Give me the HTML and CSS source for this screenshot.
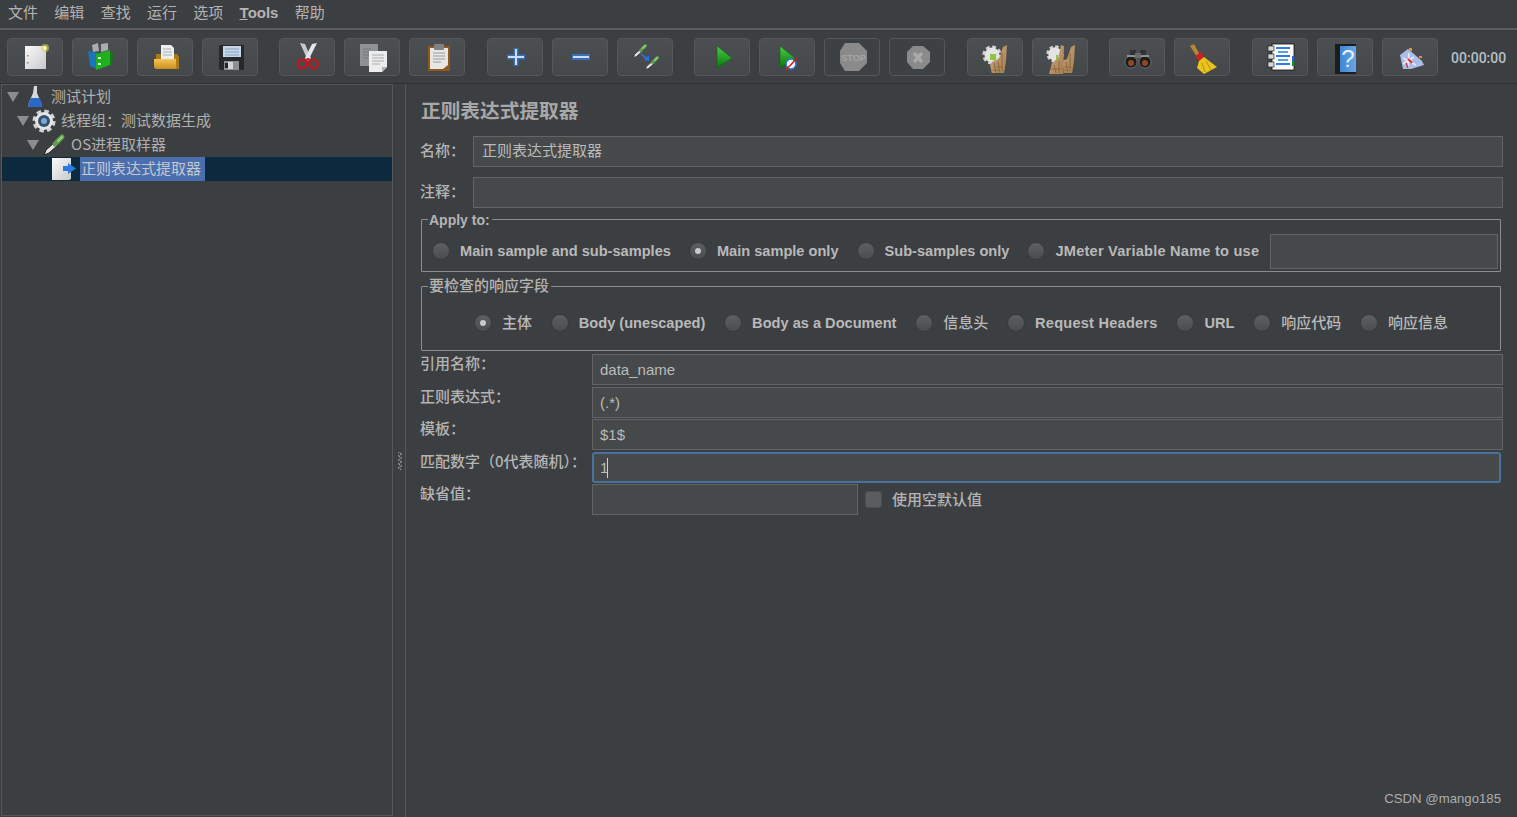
FILE: index.html
```html
<!DOCTYPE html>
<html lang="zh-CN">
<head>
<meta charset="utf-8">
<title>Apache JMeter</title>
<link rel="stylesheet" href="styles.css">
</head>
<body>
<svg class="defs" aria-hidden="true">
  <defs>
    <linearGradient id="gPage" x1="0" y1="0" x2="1" y2="1"><stop offset="0" stop-color="#fafafa"/><stop offset="1" stop-color="#c9c9c9"/></linearGradient>
    <linearGradient id="gFolder" x1="0" y1="0" x2="0" y2="1"><stop offset="0" stop-color="#f6c552"/><stop offset="1" stop-color="#c98f1f"/></linearGradient>
    <linearGradient id="gPlay" x1="0" y1="0" x2="0" y2="1"><stop offset="0" stop-color="#4fc94f"/><stop offset="1" stop-color="#057a05"/></linearGradient>
    <linearGradient id="gWood" x1="0" y1="0" x2="1" y2="1"><stop offset="0" stop-color="#c9a77c"/><stop offset="1" stop-color="#a67e50"/></linearGradient>
    <linearGradient id="gBlue" x1="0" y1="0" x2="1" y2="0"><stop offset="0" stop-color="#3f86d6"/><stop offset="1" stop-color="#6aa6e6"/></linearGradient>
    <symbol id="pipette" viewBox="0 0 24 24">
      <path d="M2 22 L4 17 L13 9 L16 12 L7 20 Z" fill="#e4e4e4" stroke="#222" stroke-width="1"/>
      <path d="M13 11 L20 4" stroke="#5f9c4e" stroke-width="5" stroke-linecap="round"/>
      <path d="M16 8 L20 4" stroke="#9ccf86" stroke-width="2" stroke-linecap="round"/>
    </symbol>
    <symbol id="gear" viewBox="0 0 24 24">
      <circle cx="12" cy="12" r="9.8" fill="none" stroke="#d2d2d2" stroke-width="3.5" stroke-dasharray="4.5 3.2"/>
      <circle cx="12" cy="12" r="9" fill="#e4e4e4"/>
    </symbol>
    <symbol id="wood" viewBox="0 0 32 32">
      <path d="M11 24 L14 20 L20 18 L24 6 L28 4 L27 20 L25 33 L13 33 Z" fill="url(#gWood)"/>
      <path d="M15 22 L17 32 M19 21 L21 32 M23 12 L23 30 M17 26 H24 M14 29 H20" stroke="#8a6841" stroke-width="1"/>
    </symbol>
  </defs>
</svg>

<nav class="menubar">
  <span class="menu">文件</span>
  <span class="menu">编辑</span>
  <span class="menu">查找</span>
  <span class="menu">运行</span>
  <span class="menu">选项</span>
  <span class="menu menu-latin"><u>T</u>ools</span>
  <span class="menu">帮助</span>
</nav>

<header class="toolbar">
  <div class="tool-group">
    <button class="tool" title="新建"><svg class="ico" viewBox="0 0 32 32">
      <rect x="6" y="5" width="21" height="23" fill="url(#gPage)"/>
      <rect x="8" y="14" width="1.5" height="1.5" fill="#888"/><rect x="8" y="21" width="1.5" height="1.5" fill="#888"/>
      <circle cx="26" cy="7" r="4" fill="#d8cf6a" opacity=".6"/><circle cx="26" cy="7" r="2" fill="#fff59a"/>
    </svg></button>
    <button class="tool" title="模板"><svg class="ico" viewBox="0 0 32 32">
      <path d="M8 4 L14 2 L15 10 L9 11 Z M17 3 L24 2 L24 9 L17 11 Z" fill="#a9adb0"/>
      <path d="M4 10 L13 12 L13 28 L6 25 Z" fill="#1c74bd"/>
      <path d="M12 13 L26 9 L26 24 L12 29 Z" fill="#1fb01f"/>
      <path d="M26 10 L29 13 L28 24 L26 25 Z" fill="#0f7d0f"/>
      <rect x="14" y="16" width="3" height="2" fill="#d7f5d7"/><rect x="14" y="22" width="3" height="2" fill="#d7f5d7"/>
    </svg></button>
    <button class="tool" title="打开"><svg class="ico" viewBox="0 0 32 32">
      <path d="M7 13 H28 L30 16 V28 H7 Z" fill="#a9791b"/>
      <path d="M12 4 H22 L25 7 V18 H12 Z" fill="#eceff1"/>
      <path d="M14 8 H22 M14 11 H23 M14 14 H23" stroke="#a9adb0" stroke-width="1"/>
      <path d="M5 18 H27 V28 H8 Q5 28 5 25 Z" fill="url(#gFolder)"/>
    </svg></button>
    <button class="tool" title="保存"><svg class="ico" viewBox="0 0 32 32">
      <path d="M5 6 Q5 4 7 4 H30 V29 H7 Q5 29 5 27 Z" fill="#26282a"/>
      <rect x="9" y="5" width="18" height="11" fill="#c9d8e8"/>
      <path d="M11 8 H25 M11 11 H25 M11 14 H25" stroke="#7fa0c6" stroke-width="1"/>
      <rect x="10" y="20" width="15" height="9" fill="#8d9092"/><rect x="14" y="21" width="5" height="7" fill="#d4d6d7"/>
      <rect x="11" y="22" width="3" height="5" fill="#222"/>
    </svg></button>
  </div>
  <div class="tool-group">
    <button class="tool" title="剪切"><svg class="ico" viewBox="0 0 32 32">
      <path d="M9 2 L14 3 L20 17 L17 20 Z" fill="#c6c9cb"/>
      <path d="M26 2 L21 3 L14 17 L17 20 Z" fill="#e4e6e7"/>
      <circle cx="11" cy="23" r="4.4" fill="none" stroke="#c8141c" stroke-width="2.2"/>
      <circle cx="22.5" cy="23" r="4.4" fill="none" stroke="#c8141c" stroke-width="2.2"/>
      <path d="M14 20 L17 18 L20 20" fill="none" stroke="#c8141c" stroke-width="2"/>
    </svg></button>
    <button class="tool" title="复制"><svg class="ico" viewBox="0 0 32 32">
      <rect x="4" y="3" width="18" height="22" fill="#8f9193"/>
      <path d="M7 8 H15 M7 11 H15 M7 14 H15 M7 17 H12" stroke="#74767a" stroke-width="1"/>
      <path d="M13 10 H31 V26 L26 31 H13 Z" fill="#ececec"/>
      <path d="M31 26 L26 26 V31 Z" fill="#b5b5b5"/>
      <path d="M16 14 H28 M16 17 H28 M16 20 H28 M16 23 H24" stroke="#a9abad" stroke-width="1"/>
    </svg></button>
    <button class="tool" title="粘贴"><svg class="ico" viewBox="0 0 32 32">
      <rect x="7" y="5" width="22" height="25" rx="1" fill="#8f5a18"/>
      <path d="M9 7 H27 V24 L22 28 H9 Z" fill="#e6e6e6"/>
      <rect x="13" y="3" width="10" height="6" rx="1" fill="#7f8385"/>
      <path d="M12 12 H24 M12 15 H24 M12 18 H24 M12 21 H20" stroke="#9a9c9e" stroke-width="1"/>
    </svg></button>
  </div>
  <div class="tool-group">
    <button class="tool" title="展开"><svg class="ico" viewBox="0 0 32 32">
      <path d="M14.5 7 H19.5 V13.5 H26 V18.5 H19.5 V25 H14.5 V18.5 H8 V13.5 H14.5 Z" fill="#3a6fb8"/>
      <path d="M16 8 H18 V15 H25 V17 H18 V24 H16 V17 H9 V15 H16 Z" fill="#c9ddf4"/>
    </svg></button>
    <button class="tool" title="折叠"><svg class="ico" viewBox="0 0 32 32">
      <rect x="8" y="13" width="18" height="6" fill="#3a6fb8"/>
      <rect x="9" y="15" width="16" height="2" fill="#c9ddf4"/>
    </svg></button>
    <button class="tool" title="切换"><svg class="ico" viewBox="0 0 32 32">
      <use href="#pipette" x="3" y="2" width="16" height="16"/>
      <use href="#pipette" x="15" y="14" width="16" height="16"/>
      <path d="M12 13 L17 17" stroke="#2b7be4" stroke-width="1.5"/>
      <path d="M20 20 L15 19 L20 14 Z" fill="#1f74ea"/>
    </svg></button>
  </div>
  <div class="tool-group">
    <button class="tool" title="启动"><svg class="ico" viewBox="0 0 32 32">
      <path d="M11 5 L26 17 L11 27 Z" fill="url(#gPlay)" stroke="#066a06" stroke-width=".6"/>
    </svg></button>
    <button class="tool" title="不停顿启动"><svg class="ico" viewBox="0 0 32 32">
      <path d="M9 5 L24 17 L9 27 Z" fill="url(#gPlay)" stroke="#066a06" stroke-width=".6"/>
      <circle cx="20" cy="23" r="5" fill="#f1f4fa" stroke="#2f73c9" stroke-width="1.6"/>
      <path d="M15 29 L26 17" stroke="#d8141c" stroke-width="1.4"/>
    </svg></button>
    <button class="tool tool-off" title="停止"><svg class="ico" viewBox="0 0 32 32">
      <path d="M9 2 H23 L31 10 V22 L23 30 H9 L4 22 V10 Z" fill="#8a8a8a"/>
      <text class="stop-text" x="17.5" y="20" text-anchor="middle">STOP</text>
    </svg></button>
    <button class="tool tool-off" title="关闭"><svg class="ico" viewBox="0 0 32 32">
      <path d="M12 5 H22 L29 11 V21 L22 28 H12 L6 21 V11 Z" fill="#8a8a8a"/>
      <path d="M13 12 L21 21 M21 12 L13 21" stroke="#aaaaaa" stroke-width="3.4"/>
    </svg></button>
  </div>
  <div class="tool-group">
    <button class="tool" title="清除"><svg class="ico" viewBox="0 0 32 32">
      <use href="#gear" x="3" y="4" width="20" height="20"/>
      <use href="#wood" x="0" y="0" width="32" height="32"/>
      <rect x="11" y="13" width="6" height="6" fill="#8fc43f"/>
    </svg></button>
    <button class="tool" title="清除全部"><svg class="ico" viewBox="0 0 32 32">
      <use href="#gear" x="2" y="4" width="18" height="18"/>
      <use href="#wood" x="3" y="0" width="32" height="32"/>
      <path d="M5 33 L8 22 L14 18 L17 4 L20 5 L19 33 Z" fill="url(#gWood)"/>
      <path d="M10 24 L12 32 M15 20 L15 32 M6 28 H18" stroke="#8a6841" stroke-width="1"/>
      <rect x="12" y="14" width="2" height="5" fill="#8fc43f"/>
    </svg></button>
  </div>
  <div class="tool-group">
    <button class="tool" title="查找"><svg class="ico" viewBox="0 0 32 32">
      <rect x="9" y="9" width="6" height="6" fill="#333"/><rect x="19" y="9" width="6" height="6" fill="#333"/>
      <rect x="14" y="12" width="6" height="5" fill="#6b6b6b"/>
      <circle cx="10" cy="21" r="6" fill="#1c1c1c" stroke="#8a8a8a" stroke-width=".6"/><circle cx="24" cy="21" r="6" fill="#1c1c1c" stroke="#8a8a8a" stroke-width=".6"/>
      <circle cx="10" cy="22" r="3" fill="#8c4a22"/><circle cx="24" cy="22" r="3" fill="#8c4a22"/>
      <path d="M6 15 H14 M20 15 H28" stroke="#a7a7a7" stroke-width="1.4"/>
    </svg></button>
    <button class="tool" title="清除日志"><svg class="ico" viewBox="0 0 32 32">
      <path d="M4 5 L8 3 L14 14 L11 16 Z" fill="#b78634"/>
      <path d="M9 15 L15 11 L18 16 L13 20 Z" fill="#d01f1f"/>
      <path d="M13 20 L18 16 L31 26 L18 33 L11 27 Z" fill="#ecc31a"/>
      <path d="M16 22 L19 31 M20 20 L25 29" stroke="#b8920f" stroke-width="1"/>
    </svg></button>
  </div>
  <div class="tool-group">
    <button class="tool" title="函数助手"><svg class="ico" viewBox="0 0 32 32">
      <rect x="8" y="3" width="22" height="26" fill="#fafafa" stroke="#111" stroke-width=".8"/>
      <rect x="4" y="5" width="6" height="5" fill="#d8d8d8" stroke="#111" stroke-width=".6"/>
      <rect x="4" y="13" width="6" height="5" fill="#d8d8d8" stroke="#111" stroke-width=".6"/>
      <rect x="4" y="21" width="6" height="5" fill="#d8d8d8" stroke="#111" stroke-width=".6"/>
      <path d="M12 7 H26 M12 15 H26 M12 23 H26" stroke="#2a7fe0" stroke-width="2"/>
      <path d="M14 11 H24 M14 19 H24" stroke="#2a7fe0" stroke-width="1.5"/>
      <rect x="28" y="15" width="2.5" height="5" fill="#2a60d0"/><rect x="28" y="20" width="2.5" height="5" fill="#1f8a2a"/>
    </svg></button>
    <button class="tool" title="帮助"><svg class="ico" viewBox="0 0 32 32">
      <rect x="6" y="3" width="21" height="30" fill="#1c1c1c"/>
      <rect x="11" y="5" width="16" height="26" fill="url(#gBlue)"/>
      <text class="help-text" x="19" y="26" text-anchor="middle">?</text>
    </svg></button>
    <button class="tool" title="日志"><svg class="ico" viewBox="0 0 32 32">
      <path d="M6 14 L14 8 L20 13 L28 20 L30 24 L17 28 L9 28 Z" fill="#a9bde8"/>
      <path d="M9 17 L16 21 L22 24 M15 12 L14 27 M9 23 L20 16" stroke="#e7e9f5" stroke-width="1.5"/>
      <path d="M14 18 L18 22" stroke="#d8323a" stroke-width="2"/><path d="M12 22 L14 27" stroke="#d8323a" stroke-width="1.4"/>
      <rect x="15" y="7" width="3" height="3" fill="#e88b3a"/><rect x="25" y="15" width="3" height="2" fill="#e88b3a"/>
    </svg></button>
  </div>
  <span class="timer">00:00:00</span>
</header>

<main class="workspace">
  <aside class="tree">
    <div class="row d0"><i class="arrow"></i><svg class="tree-ico" viewBox="0 0 24 24">
      <path d="M10 1 H13 V8 L18 20 Q18 22 16 22 H6 Q4 22 4 20 L9 8 Z" fill="#d6d9dc"/>
      <path d="M7 13 H15.5 L18 20 Q18 22 16 22 H6 Q4 22 4 20 Z" fill="#2b67c4"/>
    </svg><span class="node">测试计划</span></div>
    <div class="row d1"><i class="arrow"></i><svg class="tree-ico tree-ico-left" viewBox="0 0 24 24">
      <use href="#gear" x="0" y="0" width="24" height="24"/>
      <circle cx="12" cy="12" r="6" fill="#34526f"/><circle cx="12" cy="12" r="3" fill="#7aa7d6"/>
    </svg><span class="node">线程组：测试数据生成</span></div>
    <div class="row d2"><i class="arrow"></i><svg class="tree-ico tree-ico-left" viewBox="0 0 24 24"><use href="#pipette" x="0" y="0" width="24" height="24"/></svg><span class="node">OS进程取样器</span></div>
    <div class="row d3 selected"><i class="arrow arrow-none"></i><svg class="tree-ico tree-ico-left" viewBox="0 0 24 24">
      <path d="M0 1 H19 V22 L17 23 H0 Z" fill="url(#gPage)"/>
      <path d="M16 6 L24 11.5 L16 17 V14 H11 V9 H16 Z" fill="#2a7be0"/>
    </svg><span class="node node-selected">正则表达式提取器</span></div>
  </aside>

  <div class="splitter"><svg class="grip" viewBox="0 0 6 18"><path d="M1 0 L5 2 L1 4 L5 6 L1 8 L5 10 L1 12 L5 14 L1 16 L5 18" fill="none" stroke="#c8c8c8" stroke-width="1" stroke-dasharray="1 1"/></svg></div>

  <section class="panel">
    <h1 class="title">正则表达式提取器</h1>
    <div class="line line-name"><label class="label label-short">名称：</label><div class="field grow">正则表达式提取器</div></div>
    <div class="line line-comment"><label class="label label-short">注释：</label><div class="field grow"></div></div>

    <fieldset class="box box-apply">
      <legend class="legend legend-latin">Apply to:</legend>
      <div class="opts">
        <span class="opt"><i class="radio"></i><b class="opt-text">Main sample and sub-samples</b></span>
        <span class="opt"><i class="radio on"></i><b class="opt-text">Main sample only</b></span>
        <span class="opt"><i class="radio"></i><b class="opt-text">Sub-samples only</b></span>
        <span class="opt"><i class="radio"></i><b class="opt-text opt-loose">JMeter Variable Name to use</b></span>
        <div class="field var-field"></div>
      </div>
    </fieldset>

    <fieldset class="box box-fields">
      <legend class="legend">要检查的响应字段</legend>
      <div class="opts opts-center">
        <span class="opt"><i class="radio on"></i><b class="opt-text opt-cjk">主体</b></span>
        <span class="opt"><i class="radio"></i><b class="opt-text">Body (unescaped)</b></span>
        <span class="opt"><i class="radio"></i><b class="opt-text">Body as a Document</b></span>
        <span class="opt"><i class="radio"></i><b class="opt-text opt-cjk">信息头</b></span>
        <span class="opt"><i class="radio"></i><b class="opt-text opt-loose">Request Headers</b></span>
        <span class="opt"><i class="radio"></i><b class="opt-text">URL</b></span>
        <span class="opt"><i class="radio"></i><b class="opt-text opt-cjk">响应代码</b></span>
        <span class="opt"><i class="radio"></i><b class="opt-text opt-cjk">响应信息</b></span>
      </div>
    </fieldset>

    <div class="params">
      <label class="label">引用名称：</label><div class="field">data_name</div>
      <label class="label">正则表达式：</label><div class="field">(.*)</div>
      <label class="label">模板：</label><div class="field">$1$</div>
      <label class="label">匹配数字（0代表随机）：</label><div class="field focused">1<span class="caret"></span></div>
      <label class="label">缺省值：</label>
      <div class="default-row"><div class="field default-field"></div><i class="check"></i><span class="check-text">使用空默认值</span></div>
    </div>
  </section>
</main>
<span class="watermark">CSDN @mango185</span>
</body>
</html>
```

FILE: styles.css
```css
* { box-sizing: border-box; }
html, body { margin: 0; height: 100%; }
body {
  position: relative;
  width: 1517px;
  height: 817px;
  overflow: hidden;
  background: #3c3f41;
  color: #bbbbbb;
  font: 15px/20px "Liberation Sans", "Noto Sans CJK SC", sans-serif;
  display: flex;
  flex-direction: column;
}
.defs { position: absolute; width: 0; height: 0; }

.menubar {
  height: 30px;
  flex: none;
  display: flex;
  align-items: flex-start;
  padding: 2px 0 0 8px;
  gap: 16.3px;
  border-bottom: 2px solid #5a5c5d;
}
.menu { font-family: "Noto Sans CJK SC", sans-serif; color: #b4b4b4; line-height: 20px; }
.menu-latin { font-family: "Liberation Sans", sans-serif; font-weight: 700; line-height: 22px; }

.toolbar {
  height: 54px;
  flex: none;
  display: flex;
  align-items: flex-start;
  padding: 8px 0 0 7px;
  gap: 21.45px;
  border-bottom: 1px solid #2e3031;
}
.tool-group { display: flex; gap: 9px; }
.tool {
  width: 56px;
  height: 38px;
  padding: 2px 11px;
  border: 1px solid #55585a;
  border-radius: 4px;
  background: linear-gradient(#4b4f51, #44484a);
  display: block;
}
.tool-off { background: #3e4143; }
.ico { display: block; width: 32px; height: 32px; overflow: visible; }
.stop-text { font: 700 9px "Liberation Sans", sans-serif; fill: #a5a5a5; }
.help-text { font: 400 24px "Liberation Sans", sans-serif; fill: #e8f0fa; }
.timer {
  margin: 10px 0 0 -8px;
  font-size: 14px;
  font-weight: 500;
  color: #b6bfc8;
  white-space: nowrap;
  font-family: "Roboto", sans-serif;
}

.workspace { flex: 1; display: flex; min-height: 0; }
.tree {
  width: 392px;
  margin: 0 0 1px 1px;
  border: 1px solid #55585a;
  flex: none;
}
.row {
  height: 24px;
  display: flex;
  align-items: center;
  font-family: "Noto Sans CJK SC", sans-serif;
  color: #b0b0b0;
}
.d0 { padding-left: 5px; }
.d1 { padding-left: 15px; }
.d2 { padding-left: 25px; }
.d3 { padding-left: 35px; }
.selected { background: #0d293e; }
.arrow {
  width: 0; height: 0;
  margin-right: 5px;
  border-left: 6px solid transparent;
  border-right: 6px solid transparent;
  border-top: 10px solid #8b8d8e;
}
.arrow-none { border-top-color: transparent; }
.tree-ico { width: 24px; height: 24px; flex: none; margin-right: 3px; }
.tree-ico-left { margin-left: -2px; margin-right: 5px; }
.node { white-space: nowrap; line-height: 22px; padding-bottom: 2px; }
.node-selected {
  background: #4b6eaf;
  color: #c4c8d0;
  margin-left: -1px;
  padding: 0 4px 2px 1px;
}

.splitter {
  width: 12px;
  flex: none;
  display: flex;
  justify-content: center;
  padding: 368px 0 0 1px;
}
.grip { width: 6px; height: 18px; }

.panel {
  flex: 1;
  min-width: 0;
  border-left: 1px solid #55585a;
  padding: 12px 14px 0 14px;
  display: flex;
  flex-direction: column;
}
.title {
  margin: 0 0 12px 1px;
  height: 28px;
  font: 700 19.7px/28px "Noto Sans CJK SC", sans-serif;
  color: #a8a8a8;
}
.line { display: flex; height: 31px; }
.line-name { margin-bottom: 10px; }
.line-comment { margin-bottom: 2px; }
.label {
  font-family: "Noto Sans CJK SC", sans-serif;
  font-weight: 500;
  color: #b4b4b4;
  white-space: nowrap;
  line-height: 18px;
}
.label-short { width: 53px; flex: none; line-height: 27px; }
.field {
  height: 31px;
  border: 1px solid #646464;
  background: #45494a;
  padding: 0 7px;
  line-height: 29px;
  color: #bbbbbb;
  font-family: "Liberation Sans", "Noto Sans CJK SC", sans-serif;
  white-space: nowrap;
}
.grow { flex: 1; font-family: "Noto Sans CJK SC", sans-serif; line-height: 26px; padding-left: 8px; }

.box {
  margin: 0 2px 0 1px;
  padding: 0;
  min-width: 0;
  border: 1px solid #8c8d8e;
  border-radius: 1px;
}
.box-apply { height: 62px; margin-bottom: 5px; }
.box-fields { height: 74px; margin-bottom: 3px; }
.legend {
  margin-left: 6px;
  padding: 0 2px 2px 1px;
  font-family: "Noto Sans CJK SC", sans-serif;
  font-weight: 500;
  line-height: 16px;
  color: #b4b4b4;
}
.legend-latin { padding: 2px 2px 0 1px; font: 700 14px/16px "Liberation Sans", sans-serif; }
.opts { display: flex; align-items: center; }
.box-apply .opts { padding: 6px 3px 0 10px; gap: 18px; }
.box-apply .opt { margin-bottom: 2px; }
.opts-center { justify-content: center; gap: 18.8px; padding-top: 18px; }
.opt { display: flex; align-items: center; gap: 10px; }
.radio {
  width: 18px;
  height: 18px;
  flex: none;
  border-radius: 50%;
  border: 1px solid #37393b;
  background: linear-gradient(#5c6062, #4a4d4f);
  display: flex;
  align-items: center;
  justify-content: center;
}
.radio.on::after {
  content: "";
  width: 6px;
  height: 6px;
  border-radius: 50%;
  background: #c9c9c9;
}
.opt-text {
  font-family: "Liberation Sans", "Noto Sans CJK SC", sans-serif;
  font-size: 14.6px;
  font-weight: 700;
  color: #b9b9b9;
  white-space: nowrap;
}
.opt-loose { letter-spacing: .22px; }
.opt-cjk {
  font: 500 15px/18px "Noto Sans CJK SC", sans-serif;
  padding-bottom: 2px;
}
.var-field { width: 228px; height: 35px; flex: none; margin-left: -7px; }

.params {
  display: grid;
  grid-template-columns: 172px 1fr;
  grid-template-rows: 33px 32px 33px 32px 31px;
}
.focused {
  border: 2px solid #46739f;
  border-radius: 3px;
  line-height: 27px;
  padding-left: 6px;
  margin-right: 2px;
  display: flex;
  align-items: center;
}
.caret { width: 1px; height: 20px; background: #d0d0d0; margin-left: -1px; }
.default-row { display: flex; align-items: flex-start; }
.default-field { width: 266px; }
.check {
  width: 17px;
  height: 17px;
  margin: 7px 10px 0 7px;
  border-radius: 3px;
  background: #5a5d5f;
  border: 1px solid #4c4f51;
}
.check-text {
  font-family: "Noto Sans CJK SC", sans-serif;
  font-weight: 500;
  margin-top: 5px;
  color: #b4b4b4;
}

.watermark {
  position: absolute;
  right: 16px;
  top: 789px;
  font: 13.2px/20px "Liberation Sans", sans-serif;
  color: #adadad;
}
```
